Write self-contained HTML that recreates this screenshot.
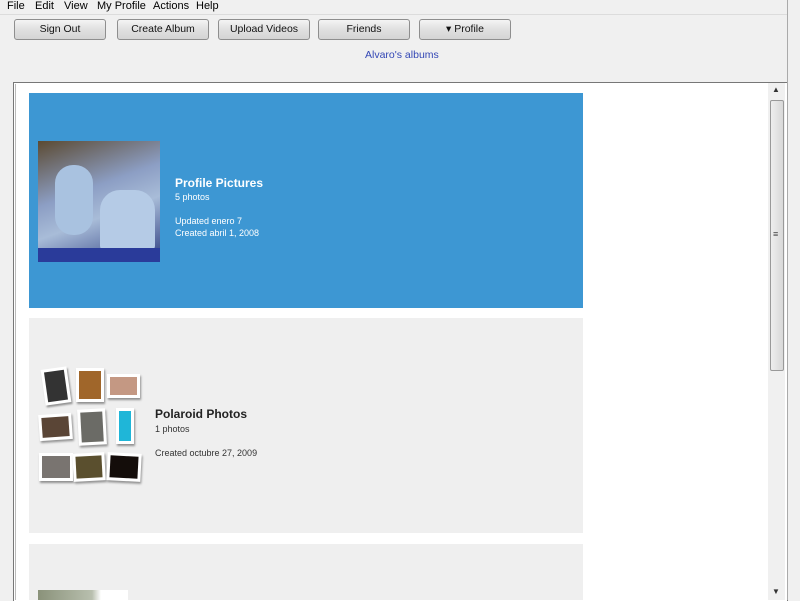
<!DOCTYPE html>
<html><head><style>
body{margin:0;width:800px;height:600px;overflow:hidden;background:#f0f0f0;font-family:"Liberation Sans",sans-serif;position:relative}
.a{position:absolute;white-space:nowrap}
.menu{top:0;left:0;height:14px;font-size:11px;color:#000}
.menu span{position:absolute;top:0;white-space:nowrap}
.btn{position:absolute;top:19px;height:19px;border:1px solid #8e8e8e;border-radius:3px;background:linear-gradient(#f4f4f4,#e0e0e0 50%,#d4d4d4);font-size:10.5px;text-align:center;line-height:19px;color:#111;white-space:nowrap}
.pol{position:absolute;background:#fff;box-shadow:1px 2px 2px rgba(0,0,0,.4);padding:3px}
.pol div{width:100%;height:100%}
</style></head><body>
<div class="a menu"><span style="left:7px">File</span><span style="left:35px">Edit</span><span style="left:64px">View</span><span style="left:97px">My Profile</span><span style="left:153px">Actions</span><span style="left:196px">Help</span></div>
<div class="a" style="left:0;top:14px;width:800px;height:1px;background:#dcdcdc"></div>
<div class="btn" style="left:14px;width:90px">Sign Out</div>
<div class="btn" style="left:117px;width:90px">Create Album</div>
<div class="btn" style="left:218px;width:90px">Upload Videos</div>
<div class="btn" style="left:318px;width:90px">Friends</div>
<div class="btn" style="left:419px;width:90px">▾ Profile</div>
<div class="a" style="left:365px;top:49px;font-size:10.5px;color:#3347b5">Alvaro's albums</div>
<div class="a" style="left:13px;top:82px;width:773px;height:518px;border:1px solid #777;border-bottom:none;background:#fff"></div>
<div class="a" style="left:15px;top:84px;width:1px;height:516px;background:#bbb"></div>
<div class="a" style="left:768px;top:83px;width:17px;height:517px;background:#f0f0f0"></div>
<div class="a" style="left:772px;top:85px;font-size:8px;color:#333">▲</div>
<div class="a" style="left:770px;top:100px;width:12px;height:269px;border:1px solid #999;border-radius:2px;background:linear-gradient(90deg,#eee,#d8d8d8)"></div>
<div class="a" style="left:773px;top:229px;font-size:9px;color:#444">≡</div>
<div class="a" style="left:772px;top:587px;font-size:8px;color:#333">▼</div>
<div class="a" style="left:787px;top:0;width:13px;height:600px;background:#f0f0f0;border-left:1px solid #aaa"></div>

<div class="a" style="left:29px;top:93px;width:554px;height:215px;background:#3d97d3"></div>
<div class="a" style="left:38px;top:141px;width:122px;height:121px;background:linear-gradient(160deg,#5b4a32 0%,#8c9ec4 40%,#a8bcd8 60%,#2c3c80 100%)"></div>
<div class="a" style="left:55px;top:165px;width:38px;height:70px;border-radius:18px;background:#a9c2e0"></div>
<div class="a" style="left:100px;top:190px;width:55px;height:60px;border-radius:20px 20px 4px 4px;background:#b5cbe6"></div>
<div class="a" style="left:38px;top:248px;width:122px;height:14px;background:#2a3b9a"></div>
<div class="a" style="left:175px;top:176px;font-size:12px;font-weight:bold;color:#fff">Profile Pictures</div>
<div class="a" style="left:175px;top:192px;font-size:9px;color:#fff">5 photos</div>
<div class="a" style="left:175px;top:216px;font-size:9px;color:#fff">Updated enero 7</div>
<div class="a" style="left:175px;top:228px;font-size:9px;color:#fff">Created abril 1, 2008</div>

<div class="a" style="left:29px;top:318px;width:554px;height:215px;background:#efefef"></div>
<div class="pol" style="left:43px;top:368px;width:20px;height:30px;transform:rotate(-8deg)"><div style="background:#333"></div></div>
<div class="pol" style="left:76px;top:368px;width:22px;height:28px"><div style="background:#a0662a"></div></div>
<div class="pol" style="left:107px;top:374px;width:27px;height:18px"><div style="background:#c49883"></div></div>
<div class="pol" style="left:39px;top:414px;width:27px;height:20px;transform:rotate(-4deg)"><div style="background:#5a4536"></div></div>
<div class="pol" style="left:78px;top:409px;width:22px;height:30px;transform:rotate(-3deg)"><div style="background:#6b6b66"></div></div>
<div class="pol" style="left:116px;top:408px;width:12px;height:30px"><div style="background:#1fb6d8"></div></div>
<div class="pol" style="left:39px;top:453px;width:28px;height:22px"><div style="background:#797470"></div></div>
<div class="pol" style="left:73px;top:453px;width:26px;height:22px;transform:rotate(-3deg)"><div style="background:#5a4f2e"></div></div>
<div class="pol" style="left:107px;top:453px;width:28px;height:22px;transform:rotate(3deg)"><div style="background:#140d0a"></div></div>
<div class="a" style="left:155px;top:407px;font-size:12px;font-weight:bold;color:#222">Polaroid Photos</div>
<div class="a" style="left:155px;top:424px;font-size:9px;color:#333">1 photos</div>
<div class="a" style="left:155px;top:448px;font-size:9px;color:#333">Created octubre 27, 2009</div>

<div class="a" style="left:29px;top:544px;width:554px;height:56px;background:#efefef"></div>
<div class="a" style="left:38px;top:590px;width:90px;height:10px;background:linear-gradient(90deg,#8a927a,#b8bfae 60%,#fff 70%)"></div>
</body></html>
